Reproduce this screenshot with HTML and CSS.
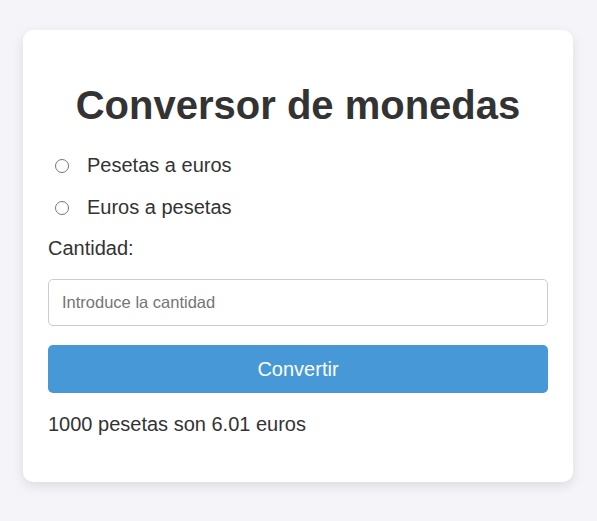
FILE: index.html
```html
<!DOCTYPE html>
<html lang="es">
<head>
<meta charset="utf-8">
<title>Conversor de monedas</title>
<link rel="stylesheet" href="styles.css">
</head>
<body>
  <main class="card">
    <h1 class="title">Conversor de monedas</h1>
    <form class="form">
      <label class="option"><input type="radio" name="dir" class="radio"><span>Pesetas a euros</span></label>
      <label class="option"><input type="radio" name="dir" class="radio"><span>Euros a pesetas</span></label>
      <label class="field-label" for="cantidad">Cantidad:</label>
      <input id="cantidad" class="input" type="text" placeholder="Introduce la cantidad">
      <button type="button" class="button">Convertir</button>
      <p class="result">1000 pesetas son 6.01 euros</p>
    </form>
  </main>
</body>
</html>
```

FILE: styles.css
```css
html {
  background: #f4f4f9;
  min-height: 100%;
}
html, body {
  margin: 0;
  padding: 0;
}
body {
  background: #f4f4f9;
  font-family: "Liberation Sans", Arial, sans-serif;
  color: #333;
  padding: 30px 24px 40px 23px;
}
.card {
  box-sizing: border-box;
  width: 550px;
  background: #fff;
  border-radius: 10px;
  box-shadow: 0 4px 12px rgba(0, 0, 0, 0.1);
  padding: 25px 25px 46px;
}
.title {
  font-size: 40px;
  line-height: 46px;
  font-weight: bold;
  text-align: center;
  margin: 27px 0 26px;
  color: #333;
}
.form {
  display: flex;
  flex-direction: column;
  gap: 19px;
  margin: 0;
}
.option {
  display: flex;
  align-items: center;
  font-size: 20px;
  line-height: 23px;
}
.radio {
  width: 14px;
  height: 14px;
  margin: 1px 18px 0 7px;
}
.field-label {
  font-size: 20px;
  line-height: 23px;
  margin-top: -1px;
}
.input {
  box-sizing: border-box;
  width: 100%;
  height: 47px;
  padding: 0 13px;
  border: 1px solid #ccc;
  border-radius: 5px;
  font-family: "Liberation Sans", Arial, sans-serif;
  font-size: 16.5px;
  color: #333;
  background: #fff;
}
.input::placeholder {
  color: #757575;
}
.button {
  box-sizing: border-box;
  width: 100%;
  height: 48px;
  border: none;
  border-radius: 5px;
  background: #4798d7;
  color: #fff;
  font-family: "Liberation Sans", Arial, sans-serif;
  font-size: 20px;
  cursor: pointer;
}
.result {
  margin: 1px 0 0;
  font-size: 20px;
  line-height: 23px;
}
```
